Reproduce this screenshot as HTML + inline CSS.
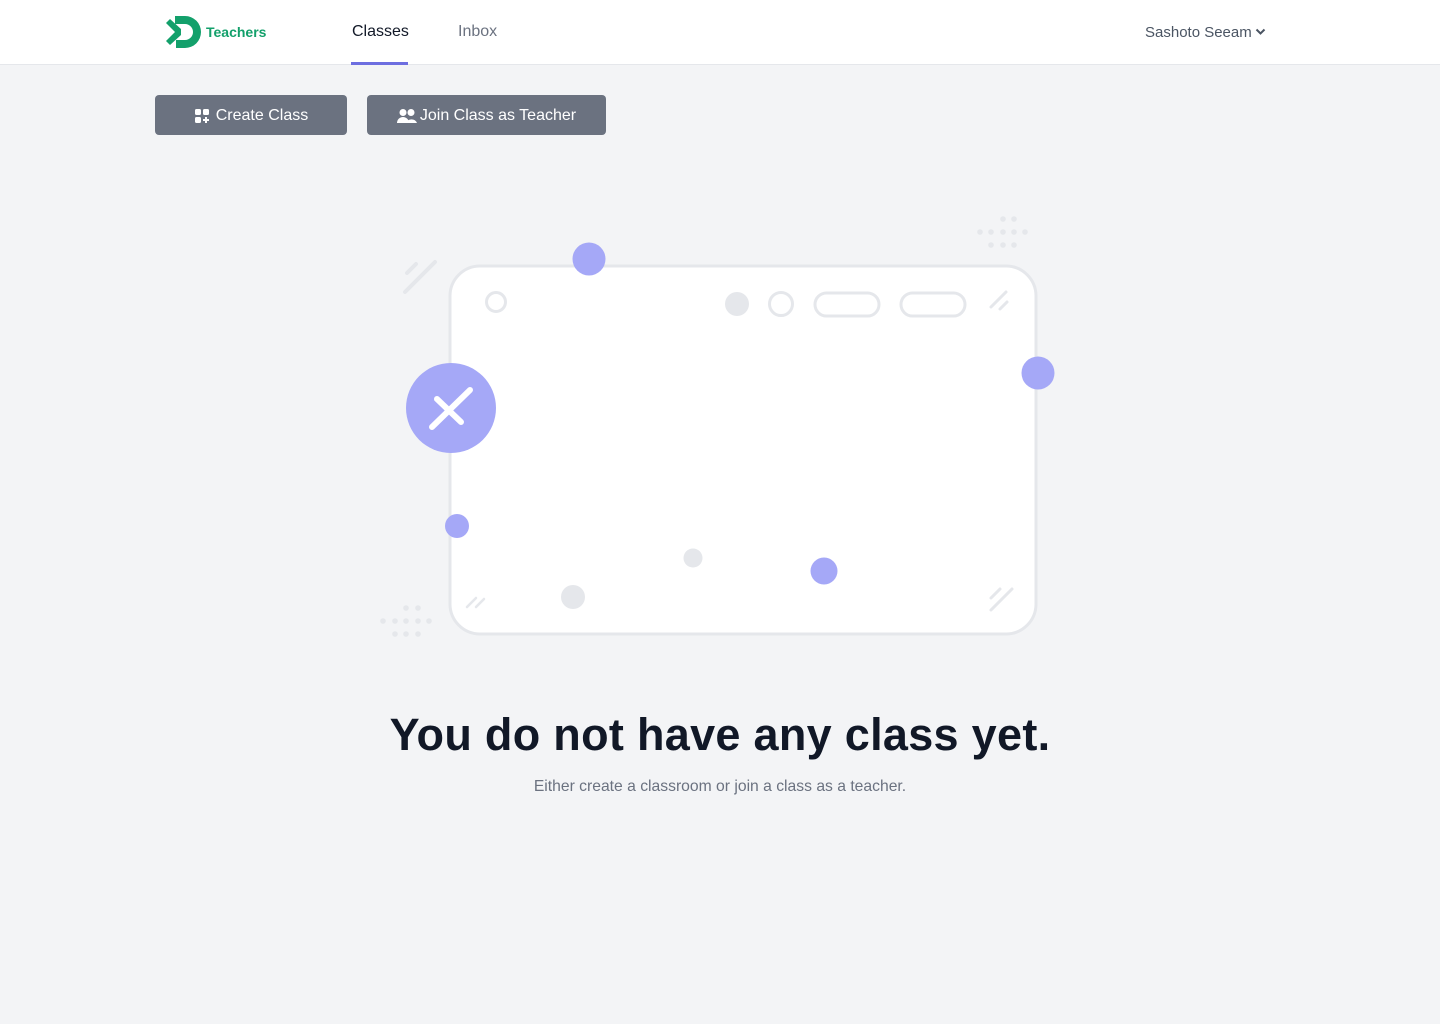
<!DOCTYPE html>
<html><head><meta charset="utf-8"><style>
*{margin:0;padding:0;box-sizing:border-box}
body{width:1440px;height:1024px;background:#f3f4f6;font-family:"Liberation Sans",sans-serif;position:relative;overflow:hidden}
.nav{position:absolute;left:0;top:0;width:1440px;height:65px;background:#fff;border-bottom:1px solid #e5e7eb}
.abs{position:absolute}
.btn{position:absolute;top:95px;height:40px;background:#6b7280;border-radius:4px;color:#fff;font-size:16px;display:flex;align-items:center;justify-content:center;gap:6px;padding-top:2px}
</style></head><body>
<div class="nav">
  <svg class="abs" style="left:164px;top:14px" width="38" height="36" viewBox="0 0 38 36">
    <path d="M11 2 H21 a16 16 0 0 1 0 32 H12 v-8 h9 a8 8 0 0 0 0-16 H11 z" fill="#13a06b"/>
    <path d="M2 9 L11 18 L2 27 L6 31 L17 21 V15 L6 5 z" fill="#13a06b"/>
  </svg>
  <div class="abs" style="left:206px;top:24px;font-size:14px;font-weight:bold;color:#13a06b">Teachers</div>
  <div class="abs" style="left:352px;top:23px;font-size:16px;color:#111827">Classes</div>
  <div class="abs" style="left:351px;top:62px;width:57px;height:3px;background:#6d6ee0"></div>
  <div class="abs" style="left:458px;top:23px;font-size:16px;color:#6b7280">Inbox</div>
  <div class="abs" style="left:1145px;top:24px;font-size:15px;color:#4b5563">Sashoto Seeam</div>
  <svg class="abs" style="left:1255px;top:28px" width="11" height="8" viewBox="0 0 11 8"><path d="M1.5 1.5 L5.5 5.5 L9.5 1.5" stroke="#4b5563" stroke-width="2" fill="none"/></svg>
</div>
<div class="btn" style="left:155px;width:192px">
  <svg width="16" height="16" viewBox="0 0 16 16" fill="#fff"><rect x="1" y="1" width="6" height="6" rx="1.5"/><rect x="9" y="1" width="6" height="6" rx="1.5"/><rect x="1" y="9" width="6" height="6" rx="1.5"/><path d="M11 9h2v2h2v2h-2v2h-2v-2H9v-2h2z"/></svg>
  <span>Create Class</span></div>
<div class="btn" style="left:367px;width:239px;gap:3px">
  <svg width="20" height="16" viewBox="0 0 20 16" fill="#fff"><circle cx="6" cy="4.5" r="3.5"/><circle cx="14" cy="4.5" r="3.5"/><path d="M0 15a6 6 0 0 1 12 0z"/><path d="M9 15a6 6 0 0 1 11 0z"/></svg>
  <span>Join Class as Teacher</span></div>
<svg class="abs" style="left:0;top:0" width="1440" height="700">
  <g fill="#e5e7eb">
    <circle cx="1003" cy="219" r="2.8"/><circle cx="1014" cy="219" r="2.8"/>
    <circle cx="980" cy="232" r="2.8"/><circle cx="991" cy="232" r="2.8"/><circle cx="1003" cy="232" r="2.8"/><circle cx="1014" cy="232" r="2.8"/><circle cx="1025" cy="232" r="2.8"/>
    <circle cx="991" cy="245" r="2.8"/><circle cx="1003" cy="245" r="2.8"/><circle cx="1014" cy="245" r="2.8"/>
    <circle cx="406" cy="608" r="2.8"/><circle cx="418" cy="608" r="2.8"/>
    <circle cx="383" cy="621" r="2.8"/><circle cx="395" cy="621" r="2.8"/><circle cx="406" cy="621" r="2.8"/><circle cx="418" cy="621" r="2.8"/><circle cx="429" cy="621" r="2.8"/>
    <circle cx="395" cy="634" r="2.8"/><circle cx="406" cy="634" r="2.8"/><circle cx="418" cy="634" r="2.8"/>
  </g>
  <g stroke="#e5e7eb" stroke-width="4" stroke-linecap="round">
    <path d="M407 273 L416 264 M405 292 L435 262"/>
  </g>
  <rect x="450" y="266" width="586" height="368" rx="30" fill="#fff" stroke="#e5e7eb" stroke-width="3"/>
  <g stroke="#e5e7eb" stroke-width="3" fill="none" stroke-linecap="round">
    <circle cx="496" cy="302" r="9.5"/>
    <circle cx="781" cy="304" r="11.5"/>
    <rect x="815" y="293" width="64" height="23" rx="11.5"/>
    <rect x="901" y="293" width="64" height="23" rx="11.5"/>
    <path d="M991 307 L1006 292 M1000 309 L1007 302"/>
    <path d="M467 607 L476 598 M476 607 L484 599" stroke-width="2.5"/>
    <path d="M991 610 L1012 589 M991 598 L1000 589"/>
  </g>
  <g fill="#e5e7eb">
    <circle cx="737" cy="304" r="12"/>
    <circle cx="693" cy="558" r="9.5"/>
    <circle cx="573" cy="597" r="12"/>
  </g>
  <g fill="#a5a8f7">
    <circle cx="589" cy="259" r="16.5"/>
    <circle cx="1038" cy="373" r="16.5"/>
    <circle cx="457" cy="526" r="12"/>
    <circle cx="824" cy="571" r="13.5"/>
    <circle cx="451" cy="408" r="45"/>
  </g>
  <path d="M432 427 L470 390 M437 399 L461 422" stroke="#fff" stroke-width="6" stroke-linecap="round"/>
</svg>
<div class="abs" style="left:0;width:1440px;top:709px;text-align:center;font-size:45px;font-weight:bold;color:#111827;letter-spacing:0.3px">You do not have any class yet.</div>
<div class="abs" style="left:0;width:1440px;top:778px;text-align:center;font-size:15.7px;color:#6b7280">Either create a classroom or join a class as a teacher.</div>
</body></html>
